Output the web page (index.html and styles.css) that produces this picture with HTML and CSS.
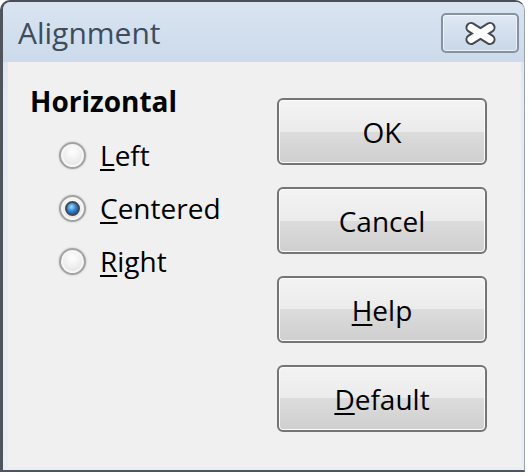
FILE: index.html
```html
<!DOCTYPE html>
<html lang="en">
<head>
    <meta charset="UTF-8">
    <title>Alignment</title>
    <link rel="stylesheet" href="styles.css">
</head>
<body>

    <div class="window">
        <div class="titlebar">
            <span class="title">Alignment</span>
            <button class="close-button" aria-label="Close">
                <svg width="33" height="25" viewBox="0 0 33 25">
                    <g stroke="#44484f" stroke-width="11" stroke-linecap="round">
                        <line x1="7" y1="6.5" x2="26" y2="18.5"/>
                        <line x1="7" y1="18.5" x2="26" y2="6.5"/>
                    </g>
                    <g stroke="#ffffff" stroke-width="7" stroke-linecap="round">
                        <line x1="7" y1="6.5" x2="26" y2="18.5"/>
                        <line x1="7" y1="18.5" x2="26" y2="6.5"/>
                    </g>
                </svg>
            </button>
        </div>

        <div class="client">
            <div class="options">
                <div class="group-label">Horizontal</div>
                <label class="radio-row">
                    <span class="radio"></span>
                    <span><u>L</u>eft</span>
                </label>
                <label class="radio-row">
                    <span class="radio checked"></span>
                    <span><u>C</u>entered</span>
                </label>
                <label class="radio-row">
                    <span class="radio"></span>
                    <span><u>R</u>ight</span>
                </label>
            </div>

            <div class="button-column">
                <button class="button">OK</button>
                <button class="button">Cancel</button>
                <button class="button"><u>H</u>elp</button>
                <button class="button"><u>D</u>efault</button>
            </div>
        </div>
    </div>

</body>
</html>
```

FILE: styles.css
```css
body {
    margin: 0;
    padding: 0;
    background: #ffffff;
    font-family: 'Open Sans', 'Noto Sans', sans-serif;
    color: #000000;
}

.window {
    box-sizing: border-box;
    width: 525px;
    height: 472px;
    display: flex;
    flex-direction: column;
    border-top: 2px solid #4a4f57;
    border-left: 3px solid #50555d;
    border-right: 1px solid #9aa3ad;
    border-bottom: 2px solid #50555d;
    border-radius: 10px 10px 0 0;
    background: linear-gradient(#d5e1ef, #e3eaf3 20%, #e8eef5);
}

.titlebar {
    height: 60px;
    flex-shrink: 0;
    display: flex;
    justify-content: space-between;
    align-items: flex-start;
    background: linear-gradient(#d9e4f1, #ccdaeb);
    border-radius: 8px 8px 0 0;
}

.title {
    font-size: 30px;
    line-height: 30px;
    padding: 16px 0 0 15px;
    color: #3e4c5e;
}

.close-button {
    width: 78px;
    height: 40px;
    margin: 11px 5px 0 0;
    padding: 0;
    border: 2px solid #8792a0;
    border-radius: 5px;
    background: linear-gradient(#e0e9f4, #d3dfed 50%, #c9d7e8);
    box-shadow: inset 0 0 0 1px rgba(255, 255, 255, 0.6);
    display: flex;
    justify-content: center;
    align-items: center;
}

.client {
    flex: 1;
    margin: 0 3px 3px 5px;
    background: #f0f0f0;
    display: flex;
    align-items: flex-start;
}

.options {
    box-sizing: border-box;
    width: 269px;
    padding: 23px 0 0 22px;
}

.group-label {
    font-size: 28px;
    line-height: 32px;
    font-weight: bold;
    margin-bottom: 12px;
}

.radio-row {
    height: 53px;
    display: flex;
    align-items: center;
    gap: 14px;
    padding-left: 29px;
    font-size: 28px;
    line-height: 53px;
}

.radio-row u,
.button u {
    text-decoration-thickness: 2px;
    text-underline-offset: 3px;
}

.radio {
    box-sizing: border-box;
    width: 27px;
    height: 27px;
    flex-shrink: 0;
    border-radius: 50%;
    border: 2px solid #a2a2a2;
    background: radial-gradient(circle at 50% 35%, #ffffff, #ececec 55%, #d3d3d3);
    box-shadow: inset 0 0 0 2px #f6f6f6, 0 0 2px rgba(0, 0, 0, 0.25);
    display: flex;
    justify-content: center;
    align-items: center;
}

.radio.checked::after {
    content: "";
    width: 11px;
    height: 11px;
    border-radius: 50%;
    border: 2px solid #3f4a55;
    background: radial-gradient(circle at 40% 35%, #a8dcff, #2f86d6 45%, #123f7a);
}

.button-column {
    display: flex;
    flex-direction: column;
    gap: 22px;
    margin-top: 36px;
}

.button {
    box-sizing: border-box;
    width: 210px;
    height: 67px;
    padding: 1px 0 0 0;
    border: 2px solid #757575;
    border-radius: 6px;
    background: linear-gradient(#f3f3f3, #ebebeb 50%, #dcdcdc 50%, #cfcfcf);
    box-shadow: inset 0 0 0 1px #fbfbfb;
    font-family: 'Open Sans', 'Noto Sans', sans-serif;
    font-size: 28px;
    color: #000000;
}
```
